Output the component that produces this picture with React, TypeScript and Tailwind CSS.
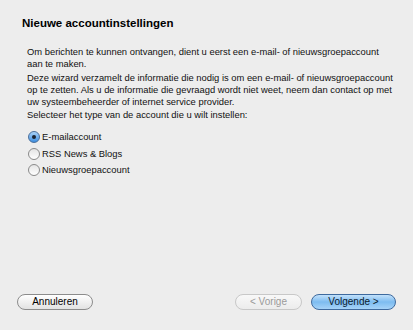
const Radio = ({ checked, label }: { checked?: boolean; label: string }) => (
  <div className="flex items-center h-[16.5px]">
    {checked ? (
      <span className="shrink-0 w-[12px] h-[12px] rounded-full border border-[#4a6f9c] bg-gradient-to-b from-[#a9d2f7] to-[#3b8ee0] flex items-center justify-center">
        <span className="w-[4px] h-[4px] rounded-full bg-[#1b2330]" />
      </span>
    ) : (
      <span className="shrink-0 w-[12px] h-[12px] rounded-full border border-[#8a8a8a] bg-gradient-to-b from-[#e4e4e4] to-[#ffffff]" />
    )}
    <span className="ml-[2px] text-[#111]">{label}</span>
  </div>
);

export default function App() {
  return (
    <div
      className="w-[413px] h-[330px] bg-[#ededed] flex flex-col text-[9.4px] leading-[12px] text-[#111] whitespace-nowrap"
      style={{ fontFamily: '"Liberation Sans", Arial, sans-serif' }}
    >
      <h1 className="pl-[22px] pt-[16px] text-[11.5px] leading-[14px] font-bold text-black">
        Nieuwe accountinstellingen
      </h1>

      <div className="pl-[27px] mt-[16px]">
        <p>
          Om berichten te kunnen ontvangen, dient u eerst een e-mail- of nieuwsgroepaccount
          <br />
          aan te maken.
        </p>
        <p className="mt-[2px]">
          Deze wizard verzamelt de informatie die nodig is om een e-mail- of nieuwsgroepaccount
          <br />
          op te zetten. Als u de informatie die gevraagd wordt niet weet, neem dan contact op met
          <br />
          uw systeembeheerder of internet service provider.
        </p>
        <p className="mt-[1px]">Selecteer het type van de account die u wilt instellen:</p>
      </div>

      <div className="pl-[28px] mt-[8px] flex flex-col">
        <Radio checked label="E-mailaccount" />
        <Radio label="RSS News & Blogs" />
        <Radio label="Nieuwsgroepaccount" />
      </div>

      <div className="flex-1" />

      <div className="flex items-center px-[17px] pb-[20px] text-[10px]">
        <button className="w-[76px] h-[16px] rounded-full border border-[#8c8c8c] bg-gradient-to-b from-[#ffffff] to-[#e2e2e2] text-black">
          Annuleren
        </button>
        <div className="flex-1" />
        <button className="w-[67px] h-[16px] rounded-full border border-[#c8c8c8] bg-gradient-to-b from-[#f8f8f8] to-[#ececec] text-[#9a9a9a]">
          &lt; Vorige
        </button>
        <button className="ml-[9px] w-[85px] h-[16px] rounded-full border border-[#3e6a9e] bg-gradient-to-b from-[#c2e1fb] via-[#7dbcf0] to-[#a6d3f8] text-[#0a1a2e]">
          Volgende &gt;
        </button>
      </div>
    </div>
  );
}
